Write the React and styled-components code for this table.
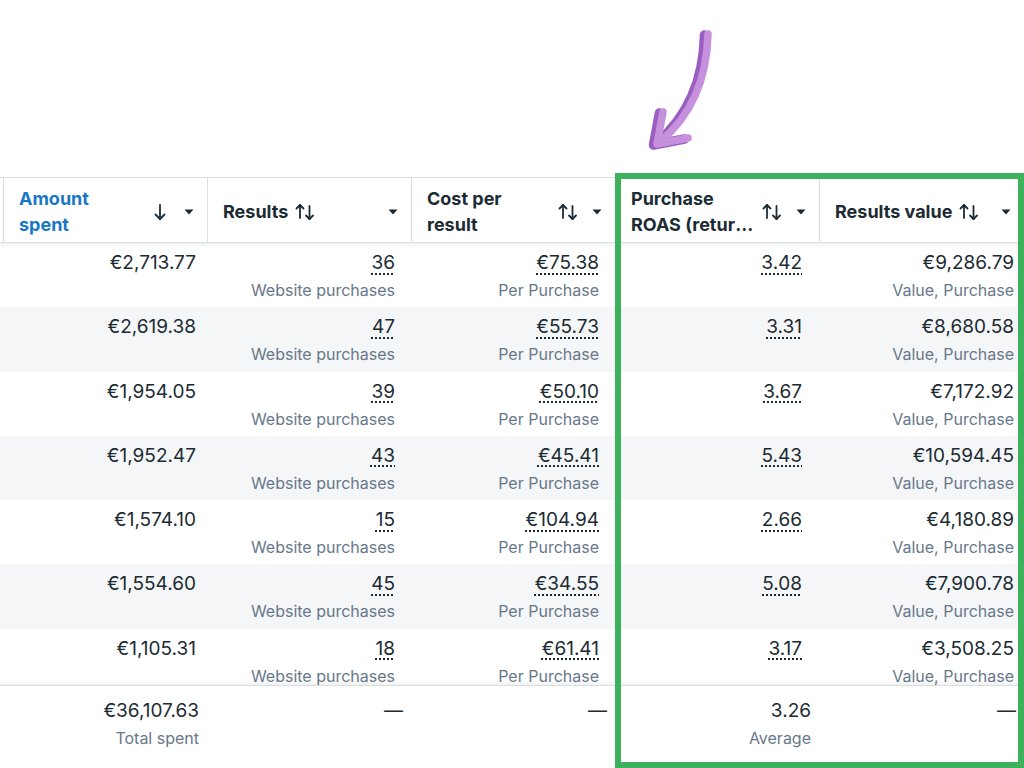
import React from "react";
import styled, { createGlobalStyle } from "styled-components";

const Global = createGlobalStyle`
  html, body { margin: 0; padding: 0; background: #ffffff; }
  body { font-family: "Inter", "Roboto", "Liberation Sans", sans-serif; color: #1c2b33; }
  * { box-sizing: border-box; }
`;

const Page = styled.div`
  position: relative;
  width: 1024px;
  height: 768px;
  overflow: hidden;
  background: #fff;
`;

const TopArea = styled.div`
  height: 177px;
  padding: 20px 0 0 630px;
`;

const Grid = styled.div`
  display: grid;
  grid-template-columns: 3px repeat(4, 204px) 1fr;
`;

const HeaderRow = styled(Grid)`
  height: 66px;
  border-top: 1px solid #dadde1;
  border-bottom: 1px solid #dadde1;
  box-shadow: 0 2px 4px rgba(0, 0, 0, 0.07);
  position: relative;
  z-index: 2;
  background: #fff;
`;

const Stub = styled.div``;

const HeadCell = styled.div`
  display: flex;
  align-items: center;
  padding: 3px 13px 0 15px;
  border-left: 1px solid #dadde1;
  min-width: 0;
`;

const Label = styled.div`
  flex: ${(p) => (p.$fill ? "1 1 0" : "0 1 auto")};
  min-width: 0;
  font-size: 18px;
  font-weight: 700;
  line-height: 26px;
  color: ${(p) => (p.$active ? "#1877c5" : "#1c2b33")};
`;

const Clip = styled.span`
  display: block;
  white-space: nowrap;
  overflow: hidden;
  text-overflow: ellipsis;
`;

const SortBox = styled.span`
  flex: 0 0 22px;
  margin-left: 6px;
  margin-right: 13px;
  display: flex;
  align-items: center;
`;

const CaretBox = styled.span`
  margin-left: auto;
  flex: 0 0 10px;
  display: flex;
  align-items: center;
`;

const Body = styled.div`
  height: 442px;
  overflow: hidden;
`;

const Row = styled(Grid)`
  height: 64.3px;
  background: ${(p) => (p.$alt ? "#f5f6f7" : "#ffffff")};
`;

const Cell = styled.div`
  display: flex;
  flex-direction: column;
  align-items: flex-end;
  padding: 8px ${(p) => p.$pr}px 0 0;
  min-width: 0;
`;

const Value = styled.span`
  font-size: 19px;
  line-height: 24px;
  color: #1c2b33;
  white-space: nowrap;
  text-decoration: ${(p) => (p.$dotted ? "underline dotted" : "none")};
  text-decoration-thickness: 1.5px;
  text-underline-offset: 4px;
`;

const Sub = styled.span`
  margin-top: 3px;
  font-size: 16px;
  line-height: 24px;
  color: #67788a;
  white-space: nowrap;
`;

const Footer = styled(Grid)`
  height: 83px;
  border-top: 1px solid #dadde1;
  box-shadow: 0 -2px 4px rgba(0, 0, 0, 0.07);
  background: #fff;
  position: relative;
  z-index: 2;
`;

const FootCell = styled(Cell)`
  padding: 13px 8px 0 0;
`;

const Highlight = styled.div`
  position: absolute;
  left: 615px;
  top: 173px;
  width: 409px;
  height: 595px;
  border: 6px solid #3cb25c;
  pointer-events: none;
  z-index: 5;
`;

const SortIcon = ({ downOnly }) => (
  <svg width="22" height="18" viewBox="0 0 22 18" fill="none" stroke="#1c2b33" strokeWidth="1.8" strokeLinecap="round" strokeLinejoin="round">
    {downOnly ? (
      <>
        <path d="M11 2 V16" />
        <path d="M6.5 11.5 L11 16 L15.5 11.5" />
      </>
    ) : (
      <>
        <path d="M6 15 V2" />
        <path d="M2.5 5.5 L6 2 L9.5 5.5" />
        <path d="M15.5 3 V16" />
        <path d="M12 12.5 L15.5 16 L19 12.5" />
      </>
    )}
  </svg>
);

const Caret = () => (
  <svg width="10" height="6" viewBox="0 0 10 6">
    <path d="M0.5 0.5 H9.5 L5 5.5 Z" fill="#1c2b33" />
  </svg>
);

const Arrow = () => (
  <svg width="100" height="140" viewBox="0 0 100 140" fill="none" strokeLinecap="round" strokeLinejoin="round">
    <g stroke="#9a5ec2" strokeWidth="9.5" transform="translate(-2.5 1)">
      <path d="M77 14 C76 58 62 94 29 122" />
      <path d="M32 92 L26 124 L57 118" />
    </g>
    <g stroke="#c690dc" strokeWidth="7.5">
      <path d="M78 14 C77 58 63 94 30 122" />
      <path d="M33 92 L27 124 L58 118" />
    </g>
  </svg>
);

const headers = [
  { key: "amount", fill: true, active: true, downOnly: true, label: <>Amount<br />spent</> },
  { key: "results", label: "Results" },
  { key: "cost", fill: true, label: <>Cost per<br />result</> },
  { key: "roas", fill: true, label: <><Clip>Purchase</Clip><Clip>ROAS (return on ad spend)</Clip></> },
  { key: "value", label: "Results value" },
];

const rows = [
  ["€2,713.77", "36", "€75.38", "3.42", "€9,286.79"],
  ["€2,619.38", "47", "€55.73", "3.31", "€8,680.58"],
  ["€1,954.05", "39", "€50.10", "3.67", "€7,172.92"],
  ["€1,952.47", "43", "€45.41", "5.43", "€10,594.45"],
  ["€1,574.10", "15", "€104.94", "2.66", "€4,180.89"],
  ["€1,554.60", "45", "€34.55", "5.08", "€7,900.78"],
  ["€1,105.31", "18", "€61.41", "3.17", "€3,508.25"],
];

const cols = [
  { pr: 11, dotted: false, sub: null },
  { pr: 16, dotted: true, sub: "Website purchases" },
  { pr: 16, dotted: true, sub: "Per Purchase" },
  { pr: 17, dotted: true, sub: null },
  { pr: 10, dotted: false, sub: "Value, Purchase" },
];

const footer = [
  ["€36,107.63", "Total spent"],
  ["—", null],
  ["—", null],
  ["3.26", "Average"],
  ["—", null],
];

export default function App() {
  return (
    <Page>
      <Global />
      <TopArea>
        <Arrow />
      </TopArea>
      <HeaderRow>
        <Stub />
        {headers.map((h) => (
          <HeadCell key={h.key}>
            <Label $fill={h.fill} $active={h.active}>{h.label}</Label>
            <SortBox><SortIcon downOnly={h.downOnly} /></SortBox>
            <CaretBox><Caret /></CaretBox>
          </HeadCell>
        ))}
      </HeaderRow>
      <Body>
        {rows.map((r, i) => (
          <Row key={i} $alt={i % 2 === 1}>
            <Stub />
            {r.map((v, j) => (
              <Cell key={j} $pr={cols[j].pr}>
                <Value $dotted={cols[j].dotted}>{v}</Value>
                {cols[j].sub && <Sub>{cols[j].sub}</Sub>}
              </Cell>
            ))}
          </Row>
        ))}
      </Body>
      <Footer>
        <Stub />
        {footer.map(([v, s], j) => (
          <FootCell key={j}>
            <Value>{v}</Value>
            {s && <Sub>{s}</Sub>}
          </FootCell>
        ))}
      </Footer>
      <Highlight />
    </Page>
  );
}
